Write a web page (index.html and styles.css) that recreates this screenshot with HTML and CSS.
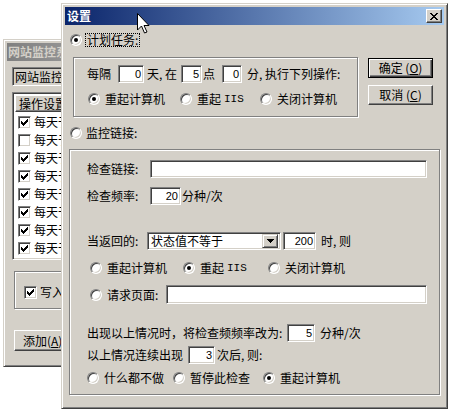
FILE: index.html
```html
<!DOCTYPE html>
<html lang="zh-CN">
<head>
<meta charset="utf-8">
<title>设置</title>
<link rel="stylesheet" href="styles.css">
</head>
<body>
<div class="desk">
  <div class="win bgwin">
    <div class="caption inactive"><span class="cap-text">网站监控系统</span></div>
    <div class="bg-body">
      <div class="site-box">网站监控系统</div>
      <div class="listview">
        <div class="lv-head">操作设置</div>
        <div class="lv-rows">
          <div class="lv-row"><span class="chk"><svg width="7" height="7"><use href="#ck"/></svg></span>每天于</div>
          <div class="lv-row"><span class="chk"></span>每天于</div>
          <div class="lv-row"><span class="chk"><svg width="7" height="7"><use href="#ck"/></svg></span>每天于</div>
          <div class="lv-row"><span class="chk"><svg width="7" height="7"><use href="#ck"/></svg></span>每天于</div>
          <div class="lv-row"><span class="chk"><svg width="7" height="7"><use href="#ck"/></svg></span>每天于</div>
          <div class="lv-row"><span class="chk"><svg width="7" height="7"><use href="#ck"/></svg></span>每天于</div>
          <div class="lv-row"><span class="chk"><svg width="7" height="7"><use href="#ck"/></svg></span>每天于</div>
          <div class="lv-row"><span class="chk"><svg width="7" height="7"><use href="#ck"/></svg></span>每天于</div>
          <div class="lv-row"><span class="chk"><svg width="7" height="7"><use href="#ck"/></svg></span>每天于</div>
        </div>
      </div>
      <div class="group bg-group"><span class="chk"><svg width="7" height="7"><use href="#ck"/></svg></span>写入日志</div>
      <div class="btn bg-add">添加(<u>A</u>)</div>
    </div>
  </div>

  <div class="win dialog">
    <div class="caption">
      <span class="cap-text">设置</span>
      <span class="close"><svg width="8" height="7" viewBox="0 0 8 7"><path d="M0 0h2v1H0zM6 0h2v1H6zM1 1h2v1H1zM5 1h2v1H5zM2 2h4v1H2zM3 3h2v1H3zM2 4h4v1H2zM1 5h2v1H1zM5 5h2v1H5zM0 6h2v1H0zM6 6h2v1H6z" fill="#000"/></svg></span>
    </div>
    <div class="dlg-body">
      <div class="top">
        <div class="left-col">
          <div class="opt opt-1"><span class="radio on"></span><span class="focus">计划任务:</span></div>
          <div class="group gb1">
            <div class="row r-sched">
              <span class="t t-every">每隔</span><span class="field f-day">0</span><span class="t t-day">天, 在</span><span class="field f-hour">5</span><span class="t t-hour">点</span><span class="field f-min">0</span><span class="t t-min">分, 执行下列操作:</span>
            </div>
            <div class="row radios r-act1">
              <span class="ropt w92"><span class="radio on"></span>重起计算机</span>
              <span class="ropt w80"><span class="radio"></span>重起 <span class="latin">IIS</span></span>
              <span class="ropt"><span class="radio"></span>关闭计算机</span>
            </div>
          </div>
        </div>
        <div class="btn-col">
          <div class="btn default">确定 (<u>O</u>)</div>
          <div class="btn">取消 (<u>C</u>)</div>
        </div>
      </div>

      <div class="opt opt-2"><span class="radio"></span><span class="opt-label">监控链接:</span></div>
      <div class="group gb2">
        <div class="row r1"><span class="t lbl63">检查链接:</span><span class="field f-url"></span></div>
        <div class="row r2"><span class="t lbl63">检查频率:</span><span class="field f-freq">20</span><span class="t u1">分种/次</span></div>
        <div class="row r3">
          <span class="t lbl60">当返回的:</span>
          <span class="combo"><span class="combo-text">状态值不等于</span><span class="combo-btn"><svg width="7" height="4" viewBox="0 0 7 4"><path d="M0 0h7v1H0zM1 1h5v1H1zM2 2h3v1H2zM3 3h1v1H3z" fill="#000"/></svg></span></span>
          <span class="field f-code">200</span><span class="t u5">时, 则</span>
        </div>
        <div class="row radios r4">
          <span class="ropt w93"><span class="radio"></span>重起计算机</span>
          <span class="ropt w85"><span class="radio on"></span>重起 <span class="latin">IIS</span></span>
          <span class="ropt"><span class="radio"></span>关闭计算机</span>
        </div>
        <div class="row r5"><span class="ropt w76"><span class="radio"></span>请求页面:</span><span class="field f-page"></span></div>
        <div class="row r6"><span class="t lbl200">出现以上情况时，将检查频频率改为:</span><span class="field f-newfreq">5</span><span class="t u5">分种/次</span></div>
        <div class="row r7"><span class="t lbl101">以上情况连续出现</span><span class="field f-times">3</span><span class="t u2">次后, 则:</span></div>
        <div class="row radios r8">
          <span class="ropt w86"><span class="radio"></span>什么都不做</span>
          <span class="ropt w90"><span class="radio"></span>暂停此检查</span>
          <span class="ropt"><span class="radio on"></span>重起计算机</span>
        </div>
      </div>
    </div>
  </div>

  <svg class="cursor" width="13" height="21" viewBox="0 0 13 21"><path d="M0.5 0.5V17L4.5 13L7.5 20L10 19L7 12.5H12Z" fill="#fff" stroke="#000" stroke-width="1"/></svg>
</div>
<svg class="defs" width="0" height="0"><symbol id="ck" viewBox="0 0 7 7"><path d="M6 0h1v1H6zM5 1h2v1H5zM0 2h1v1H0zM4 2h3v1H4zM0 3h2v1H0zM3 3h3v1H3zM0 4h5v1H0zM1 5h3v1H1zM2 6h1v1H2z" fill="#000"/></symbol></svg>
</body>
</html>
```

FILE: styles.css
```css
* { box-sizing: border-box; margin: 0; padding: 0; }
html, body { width: 451px; height: 411px; }
body {
  background: #fff;
  overflow: hidden;
  font-family: "Noto Sans CJK SC", "Noto Sans", sans-serif;
  font-size: 12px;
  line-height: 14px;
  color: #000;
}
.desk { position: relative; width: 451px; height: 411px; }
.defs { display: block; width: 0; height: 0; overflow: hidden; }

/* classic window frame */
.win {
  position: absolute;
  display: flex;
  flex-direction: column;
  background: #d4d0c8;
  border: 1px solid;
  border-color: #d4d0c8 #404040 #404040 #d4d0c8;
  box-shadow: inset 1px 1px #fff, inset -1px -1px #808080;
  padding: 3px;
}
.bgwin { left: 3px; top: 39px; width: 200px; height: 328px; z-index: 1; }
.dialog { left: 61px; top: 3px; width: 387px; height: 406px; z-index: 2; }

.caption {
  flex: none;
  height: 18px;
  display: flex;
  align-items: center;
  padding-left: 2px;
  background: linear-gradient(90deg, #0a246a, #a6caf0);
  color: #fff;
  font-weight: bold;
  white-space: nowrap;
  overflow: hidden;
}
.caption.inactive {
  background: linear-gradient(90deg, #808080, #c0c0c0);
  color: #d4d0c8;
  padding-left: 1px;
}
.close {
  margin-left: auto;
  margin-right: 2px;
  width: 16px;
  height: 14px;
  display: flex;
  align-items: center;
  justify-content: center;
  background: #d4d0c8;
  border: 1px solid;
  border-color: #fff #404040 #404040 #fff;
  box-shadow: inset -1px -1px #808080;
}
.close svg, .combo-btn svg, .chk svg { display: block; }

/* bevels */
.field, .chk, .combo, .site-box, .listview {
  border: 1px solid;
  border-color: #808080 #fff #fff #808080;
  box-shadow: inset 1px 1px #404040, inset -1px -1px #d4d0c8;
}
.field {
  flex: none;
  display: flex;
  align-items: center;
  justify-content: flex-end;
  height: 18px;
  padding: 0 2px 1px 0;
  background: #fff;
  font-family: "Liberation Sans", Arial, sans-serif;
  font-size: 11px;
}
.chk {
  flex: none;
  width: 13px;
  height: 13px;
  background: #fff;
  display: flex;
  align-items: center;
  justify-content: center;
}
.radio {
  flex: none;
  position: relative;
  width: 12px;
  height: 12px;
  border-radius: 50%;
  background: #fff;
  border: 1px solid;
  border-color: #808080 #fff #fff #808080;
  box-shadow: inset 1px 1px #404040, inset -1px -1px #d4d0c8;
}
.radio.on::after {
  content: "";
  position: absolute;
  left: 3px;
  top: 3px;
  width: 4px;
  height: 4px;
  border-radius: 50%;
  background: #000;
}
.btn {
  flex: none;
  display: flex;
  align-items: center;
  justify-content: center;
  width: 65px;
  height: 20px;
  background: #d4d0c8;
  border: 1px solid;
  border-color: #fff #404040 #404040 #fff;
  box-shadow: inset -1px -1px #808080;
  white-space: nowrap;
}
.btn.default {
  border-color: #000;
  box-shadow: inset 1px 1px #fff, inset -1px -1px #404040, inset -2px -2px #808080;
}
.btn u { text-decoration: underline; }
.group {
  flex: none;
  border: 1px solid #808080;
  box-shadow: inset 1px 1px #fff, 1px 1px #fff;
}
.latin { font-family: "Liberation Mono", monospace; font-size: 11px; margin-left: 3px; }

/* background window */
.bg-body {
  flex: 1;
  display: flex;
  flex-direction: column;
  align-items: flex-start;
  padding: 6px 0 0 5px;
  white-space: nowrap;
}
.site-box {
  width: 150px;
  height: 19px;
  padding: 2px 0 0 2px;
  background: #d4d0c8;
  overflow: hidden;
}
.listview {
  margin-top: 6px;
  width: 170px;
  height: 168px;
  padding: 2px;
  background: #fff;
  overflow: hidden;
}
.lv-head {
  width: 120px;
  height: 17px;
  display: flex;
  align-items: center;
  padding-left: 3px;
  background: #d4d0c8;
  border: 1px solid;
  border-color: #fff #404040 #404040 #fff;
  box-shadow: inset -1px -1px #808080;
}
.lv-rows { padding-top: 1px; }
.lv-row { height: 18px; display: flex; align-items: center; padding-left: 3px; }
.lv-row .chk { margin-right: 3px; }
.bg-group {
  margin: 11px 0 0 2px;
  width: 150px;
  height: 38px;
  display: flex;
  align-items: center;
  padding: 4px 0 0 9px;
}
.bg-group .chk { margin-right: 3px; }
.bg-add {
  margin: 21px 0 0 2px;
  width: 80px;
  height: 21px;
  justify-content: flex-start;
  padding-left: 8px;
}

/* dialog body */
.dlg-body {
  flex: 1;
  display: flex;
  flex-direction: column;
  align-items: flex-start;
  white-space: nowrap;
}
.top { display: flex; align-items: flex-start; }
.left-col { flex: none; width: 293px; }
.opt { display: flex; align-items: center; height: 16px; margin-left: 5px; }
.opt-1 { margin-top: 7px; }
.opt-1 .radio { margin-right: 3px; }
.focus {
  height: 14px;
  line-height: 12px;
  padding: 0 1px 0 1px;
  border: 1px dotted #000;
}
.opt-2 { margin-top: 8px; }
.opt-2 .radio { margin-right: 4px; }

.btn-col {
  flex: none;
  margin: 33px 0 0 10px;
  display: flex;
  flex-direction: column;
  gap: 7px;
}

.row { display: flex; align-items: center; }
.t { flex: none; }
.ropt { flex: none; display: flex; align-items: center; }
.ropt .radio { margin-right: 5px; }

.gb1 { margin: 9px 0 0 8px; width: 285px; height: 60px; padding: 7px 0 0 13px; }
.r-sched { height: 18px; }
.t-every { width: 31px; }
.f-day { width: 26px; }
.t-day { width: 37px; padding-left: 3px; }
.f-hour { width: 21px; }
.t-hour { width: 20px; padding-left: 1px; }
.f-min { width: 20px; }
.t-min { padding-left: 5px; }
.r-act1 { margin: 8px 0 0 1px; height: 16px; }
.w92 { width: 92px; }
.w80 { width: 80px; }

.gb2 { margin: 8px 0 0 4px; width: 371px; height: 246px; padding: 10px 0 0 17px; }
.r1 { height: 18px; }
.lbl63 { width: 63px; }
.lbl60 { width: 60px; }
.f-url { width: 277px; }
.r2 { height: 18px; margin-top: 9px; }
.f-freq { width: 31px; }
.u1 { margin-left: 1px; }
.u2 { margin-left: 2px; }
.u5 { margin-left: 5px; }
.r3 { height: 18px; margin-top: 27px; }
.combo {
  flex: none;
  display: flex;
  align-items: center;
  width: 134px;
  height: 18px;
  padding: 2px;
  background: #fff;
}
.combo-text { flex: 1; padding-left: 1px; }
.combo-btn {
  flex: none;
  width: 16px;
  height: 14px;
  display: flex;
  align-items: center;
  justify-content: center;
  background: #d4d0c8;
  border: 1px solid;
  border-color: #d4d0c8 #404040 #404040 #d4d0c8;
  box-shadow: inset 1px 1px #fff, inset -1px -1px #808080;
}
.f-code { width: 33px; margin-left: 2px; }
.r4 { height: 16px; margin: 10px 0 0 3px; }
.w93 { width: 93px; }
.w85 { width: 85px; }
.r5 { height: 19px; margin: 9px 0 0 3px; }
.w76 { width: 76px; }
.f-page { width: 261px; height: 19px; }
.r6 { height: 18px; margin-top: 20px; }
.lbl200 { width: 200px; }
.f-newfreq { width: 28px; }
.r7 { height: 18px; margin-top: 4px; }
.lbl101 { width: 101px; }
.f-times { width: 27px; }
.r8 { height: 16px; margin-top: 6px; }
.w86 { width: 86px; }
.w90 { width: 90px; }

.cursor { position: absolute; left: 137px; top: 13px; z-index: 3; }
```
